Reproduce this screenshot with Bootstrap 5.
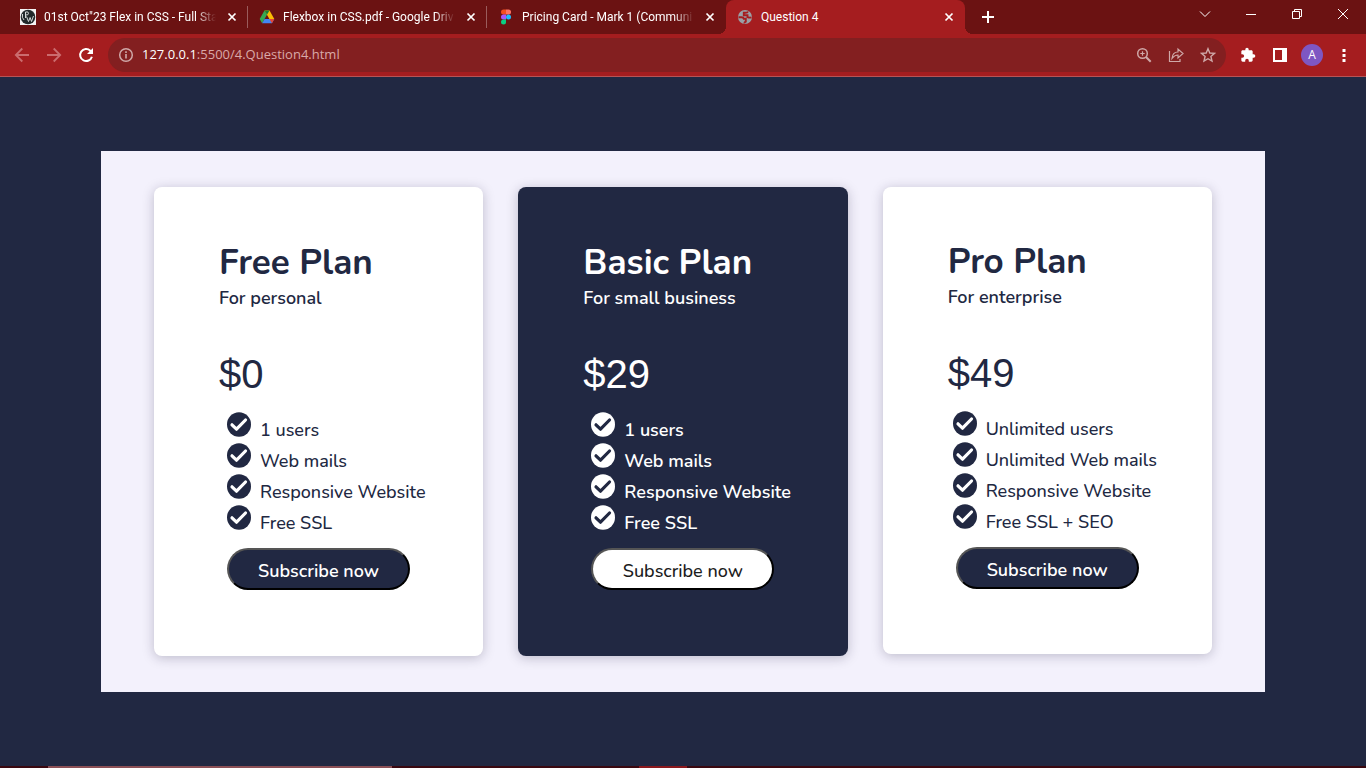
<!DOCTYPE html>
<html lang="en">
<head>
<meta charset="utf-8">
<meta name="viewport" content="width=device-width, initial-scale=1">
<title>Question 4</title>
<link href="https://cdn.jsdelivr.net/npm/bootstrap@5.3.0/dist/css/bootstrap.min.css" rel="stylesheet">
<style>
:root { --navy: #212842; --strip: #6b1212; --bar: #a51d1f; --omni: #831f20; }
body { background: var(--navy); font-family: "Open Sans", sans-serif; }
svg { display: block; flex: none; }
button { font-family: inherit; }

/* Browser window */
.tab-strip { background: var(--strip); height: 34px; padding-left: 9px; color: #fff; }
.browser-tab { width: 239px; padding: 0 8px 0 11px; gap: 8px; font-family: Roboto, sans-serif; font-size: 12px; color: #fff; position: relative; }
.browser-tab .tab-title { flex: 1 1 0; min-width: 0; white-space: nowrap; color: inherit; text-decoration: none; line-height: 34px; }
.browser-tab.faded .tab-title { -webkit-mask-image: linear-gradient(90deg, #000 88%, transparent); mask-image: linear-gradient(90deg, #000 88%, transparent); }
.browser-tab.divided { border-right: 1px solid; border-image: linear-gradient(transparent 7px, #9a5c5c 7px 27px, transparent 27px) 1; padding-right: 7px; }
.browser-tab.current { background: var(--bar); border-radius: 8px 8px 0 0; }
.browser-tab.current::before, .browser-tab.current::after { content: ""; position: absolute; bottom: 0; width: 8px; height: 8px; }
.browser-tab.current::before { left: -8px; background: radial-gradient(circle at 0 0, transparent 8px, var(--bar) 8px); }
.browser-tab.current::after { right: -8px; background: radial-gradient(circle at 100% 0, transparent 8px, var(--bar) 8px); }
.glyph-btn { background: none; border: 0; padding: 0; color: #fff; display: flex; align-items: center; justify-content: center; flex: none; }
.glyph-16 { width: 16px; height: 34px; }
.glyph-32 { width: 32px; height: 34px; }
.glyph-46 { width: 46px; height: 28px; }
.glyph-tall { height: 34px; }
.toolbar { background: var(--bar); height: 43px; padding: 0 6px; gap: 6px; border-bottom: 1px solid #b75355; }
.omnibox { background: var(--omni); height: 34px; border-radius: 17px; padding: 0 2px 0 10px; font-size: 13px; }
.omnibox label { color: #fff; margin-left: 8px; }
.omnibox input { background: none; border: 0; outline: 0; padding: 0; color: #d9a9a9; min-width: 0; }
.soft { color: #cfa8a8; }
.dimmed { color: #cb6c6e; }
.avatar { width: 22px; height: 22px; background: #7e57c2; font-size: 12px; }

/* Pricing page */
.pricing-page { padding: 74px 101px; }
.panel { background: #f3f1fc; padding: 36px 53px; }
.plans { display: grid; grid-template-columns: repeat(auto-fit, minmax(280px, 1fr)); gap: 35px; align-items: start; }
.plan { background: #fff; color: var(--navy); border-radius: 8px; padding: 52px 24px 66px 65px; box-shadow: 0 2px 12px rgba(33, 28, 60, .25); font-family: Nunito, "Open Sans", sans-serif; }
.plan.dark { background: var(--navy); color: #fff; }
.plan.pro { padding-top: 51px; padding-bottom: 65px; }
.plan h2 { font-size: 35px; line-height: 48px; font-weight: 700; margin: 0; white-space: nowrap; }
.plan .audience { font-size: 18px; line-height: 22px; font-weight: 600; margin: 0 0 38px; }
.plan .price { font-family: "Liberation Sans", sans-serif; font-size: 40px; line-height: 54px; margin: 0 0 12px; }
.plan ul { padding-left: 8px; margin: 0 0 11px; font-size: 18px; font-weight: 500; }
.plan.pro ul { padding-left: 5px; }
.plan li { line-height: 27px; padding-top: 4px; gap: 9px; white-space: nowrap; }
.plan li svg { margin-top: -5px; }
.plan.dark li { font-weight: 600; }
.plan .subscribe { margin-left: 8px; width: 183px; height: 42px; border: 2px solid; border-color: #555 #000 #000 #555; border-radius: 21px; background: var(--navy); color: #fff; font-size: 18px; line-height: 24px; font-weight: 600; padding: 4px 0 0; }
.plan.dark .subscribe { background: #fff; color: #1c1c1c; font-weight: 500; }

.taskbar { height: 2px; background: #3a0810; padding-left: 48px; }
.task-search { width: 344px; background: #8c5056; }
.task-active { width: 48px; margin-left: 247px; background: #8a181d; }
</style>
</head>
<body class="d-flex flex-column min-vh-100">
<svg width="0" height="0" class="position-absolute" aria-hidden="true">
  <symbol id="x" viewBox="0 0 16 16"><path d="M4.500 4.500l7 7m0-7l-7 7" stroke="currentColor" stroke-width="1.700" fill="none"/></symbol>
  <mask id="tick"><rect width="24" height="25" fill="#fff"/><path d="M5 12.800l4.500 4.400 9-9.200" fill="none" stroke="#000" stroke-width="3.200" stroke-linecap="round" stroke-linejoin="round"/></mask>
  <symbol id="check" viewBox="0 0 24 25"><ellipse cx="12" cy="12.500" rx="12" ry="12.200" fill="currentColor" mask="url(#tick)"/></symbol>
</svg>

<header>
  <div class="tab-strip d-flex">
    <div class="browser-tab faded divided d-flex align-items-center">
      <svg width="16" height="16" viewBox="0 0 16 16"><path fill="#f4f4f4" d="M0 0h16v16H0z"/><circle cx="8" cy="8" r="7.300" fill="#222a2c"/><path d="M5.500 9V3q3-.8 3 1.300T5.500 6M6.500 7.500l2 5 1.600-4 1.400 4L13.500 7M2.500 5q-1 3.500 1.500 6" stroke="#d5dada" stroke-width="1" fill="none"/></svg>
      <a class="tab-title" href="#">01st Oct"23 Flex in CSS - Full Sta</a>
      <button class="glyph-btn glyph-16" aria-label="Close tab"><svg width="16" height="16"><use href="#x"/></svg></button>
    </div>
    <div class="browser-tab faded divided d-flex align-items-center">
      <svg width="16" height="16" viewBox="0 0 16 16"><path fill="#34a853" d="M5.500 1.500L.7 10l2.400 4.300L8 5.800z"/><path fill="#fbbc04" d="M5.500 1.500h5L15.300 10h-4.900z"/><path fill="#4285f4" d="M3.100 14.300L5.600 10h9.700l-2.400 4.300z"/><path fill="#ea4335" d="M10.400 10h4.900l-2.400 4.300z"/><path fill="#188038" d="M5.500 1.500h5L8 5.800z"/></svg>
      <a class="tab-title" href="#">Flexbox in CSS.pdf - Google Driv</a>
      <button class="glyph-btn glyph-16" aria-label="Close tab"><svg width="16" height="16"><use href="#x"/></svg></button>
    </div>
    <div class="browser-tab faded d-flex align-items-center">
      <svg width="16" height="16" viewBox="0 0 16 16"><path fill="#f24e1e" d="M8 .5H5.500a2.500 2.500 0 0 0 0 5H8z"/><path fill="#ff7262" d="M8 .5h2.500a2.500 2.500 0 0 1 0 5H8z"/><path fill="#a259ff" d="M8 5.500H5.500a2.500 2.500 0 0 0 0 5H8z"/><circle cx="10.500" cy="8" r="2.500" fill="#1abcfe"/><path fill="#0acf83" d="M8 10.500H5.500A2.500 2.500 0 1 0 8 13z"/></svg>
      <a class="tab-title" href="#">Pricing Card - Mark 1 (Communi</a>
      <button class="glyph-btn glyph-16" aria-label="Close tab"><svg width="16" height="16"><use href="#x"/></svg></button>
    </div>
    <div class="browser-tab current d-flex align-items-center">
      <svg width="16" height="16" viewBox="0 0 16 16"><circle cx="8" cy="8" r="7" fill="#9aa0a6"/><path d="M1.500 8.300h3q2 0 2.300 1.500h2v2.700q-1.500.6-1.500 2M11 2.500q-.5 1.300-2.500 1.300H6.800v2.400h3.700v1.900q2 .8 4 .3" fill="none" stroke="#a51d1f" stroke-width="1.900"/></svg>
      <a class="tab-title" href="#" aria-current="page">Question 4</a>
      <button class="glyph-btn glyph-16" aria-label="Close tab"><svg width="16" height="16"><use href="#x"/></svg></button>
    </div>
    <button class="glyph-btn glyph-46 glyph-tall" aria-label="New tab"><svg width="14" height="14" viewBox="0 0 14 14"><path d="M7 1v12M1 7h12" stroke="#fff" stroke-width="2"/></svg></button>
    <div class="d-flex ms-auto">
      <button class="glyph-btn glyph-46" aria-label="Search tabs"><svg width="12" height="12" viewBox="0 0 12 12"><path d="M1 3.500l5 5 5-5" fill="none" stroke="#fff"/></svg></button>
      <button class="glyph-btn glyph-46" aria-label="Minimize"><svg width="10" height="10" viewBox="0 0 10 10"><path d="M0 5.500h10" stroke="#fff"/></svg></button>
      <button class="glyph-btn glyph-46" aria-label="Restore"><svg width="10" height="10" viewBox="0 0 10 10"><path d="M.5 2.500h7v7h-7zM2.500 2.500v-2h7v7h-2" fill="none" stroke="#fff"/></svg></button>
      <button class="glyph-btn glyph-46" aria-label="Close window"><svg width="10" height="10" viewBox="0 0 10 10"><path d="M0 0l10 10M10 0L0 10" stroke="#fff"/></svg></button>
    </div>
  </div>

  <div class="toolbar d-flex align-items-center">
    <nav class="d-flex" aria-label="History">
      <button class="glyph-btn glyph-32 dimmed" aria-label="Back"><svg width="16" height="16" viewBox="0 0 16 16"><path d="M15 8H2M8.300 1.500L1.800 8l6.500 6.500" fill="none" stroke="currentColor" stroke-width="1.800"/></svg></button>
      <button class="glyph-btn glyph-32 dimmed" aria-label="Forward"><svg width="16" height="16" viewBox="0 0 16 16"><path d="M1 8h13M7.700 1.500L14.200 8l-6.500 6.500" fill="none" stroke="currentColor" stroke-width="1.800"/></svg></button>
      <button class="glyph-btn glyph-32" aria-label="Reload"><svg width="16" height="16" viewBox="0 0 16 16"><path d="M13.900 9.700A6 6 0 1 1 12.300 3.700L14 5.500" fill="none" stroke="#fff" stroke-width="2"/><path d="M15 1v6H9z" fill="#fff"/></svg></button>
    </nav>
    <div class="omnibox d-flex align-items-center flex-grow-1">
      <svg class="soft" width="16" height="16" viewBox="0 0 16 16"><circle cx="8" cy="8" r="6.300" fill="none" stroke="currentColor" stroke-width="1.500"/><path d="M8 7v4.500M8 4.300V6" stroke="currentColor" stroke-width="1.600"/></svg>
      <label for="address">127.0.0.1</label><input id="address" class="flex-grow-1" type="text" value=":5500/4.Question4.html">
      <button class="glyph-btn glyph-32 soft" aria-label="Zoom"><svg width="16" height="16" viewBox="0 0 16 16"><circle cx="6.500" cy="6.500" r="4.800" fill="none" stroke="currentColor" stroke-width="1.500"/><path d="M10 10l4.700 4.700" stroke="currentColor" stroke-width="2"/><path d="M6.500 4.300v4.400M4.300 6.500h4.400" stroke="currentColor" stroke-width="1.200"/></svg></button>
      <button class="glyph-btn glyph-32 soft" aria-label="Share"><svg width="16" height="16" viewBox="0 0 16 16"><path d="M1.500 4v10.500h10.500V12M4 11.500Q4.500 5 10 5V2l5 4.500-5 4.500V8Q6.500 8 4 11.500z" fill="none" stroke="currentColor" stroke-width="1.200"/></svg></button>
      <button class="glyph-btn glyph-32 soft" aria-label="Bookmark"><svg width="16" height="16" viewBox="0 0 16 16"><path d="M8 1.700l1.800 4.300 4.700.4-3.600 3.100 1.100 4.600L8 11.700l-4 2.400 1.100-4.600-3.600-3.100 4.700-.4z" fill="none" stroke="currentColor" stroke-width="1.400"/></svg></button>
    </div>
    <div class="d-flex">
      <button class="glyph-btn glyph-32" aria-label="Extensions"><svg width="16" height="16" viewBox="0 0 24 24"><path fill="#fff" d="M20.500 11H19V7c0-1.100-.9-2-2-2h-4V3.500a2.500 2.500 0 0 0-5 0V5H4c-1.100 0-2 .9-2 2v3.800h1.500a2.700 2.700 0 0 1 0 5.400H2V20c0 1.100.9 2 2 2h3.800v-1.500a2.700 2.700 0 0 1 5.400 0V22H17c1.100 0 2-.9 2-2v-4h1.500a2.500 2.500 0 0 0 0-5z"/></svg></button>
      <button class="glyph-btn glyph-32" aria-label="Side panel"><svg width="14" height="14" viewBox="0 0 14 14"><path fill="#fff" fill-rule="evenodd" d="M0 0h14v14H0zM2 2v10h7V2z"/></svg></button>
      <button class="glyph-btn glyph-32" aria-label="Profile"><span class="avatar rounded-circle d-flex align-items-center justify-content-center">A</span></button>
      <button class="glyph-btn glyph-32" aria-label="Menu"><svg width="4" height="14" viewBox="0 0 4 14"><path d="M.5 1h3v3h-3zM.5 6h3v3h-3zM.5 11h3v3h-3z" fill="#fff"/></svg></button>
    </div>
  </div>
</header>

<main class="pricing-page flex-grow-1">
  <div class="panel">
    <div class="plans">
      <section class="plan">
        <h2>Free Plan</h2>
        <p class="audience">For personal</p>
        <p class="price">$0</p>
        <ul class="list-unstyled">
          <li class="d-flex"><svg width="24" height="25"><use href="#check"/></svg>1 users</li>
          <li class="d-flex"><svg width="24" height="25"><use href="#check"/></svg>Web mails</li>
          <li class="d-flex"><svg width="24" height="25"><use href="#check"/></svg>Responsive Website</li>
          <li class="d-flex"><svg width="24" height="25"><use href="#check"/></svg>Free SSL</li>
        </ul>
        <button class="subscribe">Subscribe now</button>
      </section>
      <section class="plan dark">
        <h2>Basic Plan</h2>
        <p class="audience">For small business</p>
        <p class="price">$29</p>
        <ul class="list-unstyled">
          <li class="d-flex"><svg width="24" height="25"><use href="#check"/></svg>1 users</li>
          <li class="d-flex"><svg width="24" height="25"><use href="#check"/></svg>Web mails</li>
          <li class="d-flex"><svg width="24" height="25"><use href="#check"/></svg>Responsive Website</li>
          <li class="d-flex"><svg width="24" height="25"><use href="#check"/></svg>Free SSL</li>
        </ul>
        <button class="subscribe">Subscribe now</button>
      </section>
      <section class="plan pro">
        <h2>Pro Plan</h2>
        <p class="audience">For enterprise</p>
        <p class="price">$49</p>
        <ul class="list-unstyled">
          <li class="d-flex"><svg width="24" height="25"><use href="#check"/></svg>Unlimited users</li>
          <li class="d-flex"><svg width="24" height="25"><use href="#check"/></svg>Unlimited Web mails</li>
          <li class="d-flex"><svg width="24" height="25"><use href="#check"/></svg>Responsive Website</li>
          <li class="d-flex"><svg width="24" height="25"><use href="#check"/></svg>Free SSL + SEO</li>
        </ul>
        <button class="subscribe">Subscribe now</button>
      </section>
    </div>
  </div>
</main>

<footer class="taskbar d-flex">
  <div class="task-search"></div>
  <div class="task-active"></div>
</footer>
<script src="https://cdn.jsdelivr.net/npm/bootstrap@5.3.0/dist/js/bootstrap.bundle.min.js"></script>
</body>
</html>
